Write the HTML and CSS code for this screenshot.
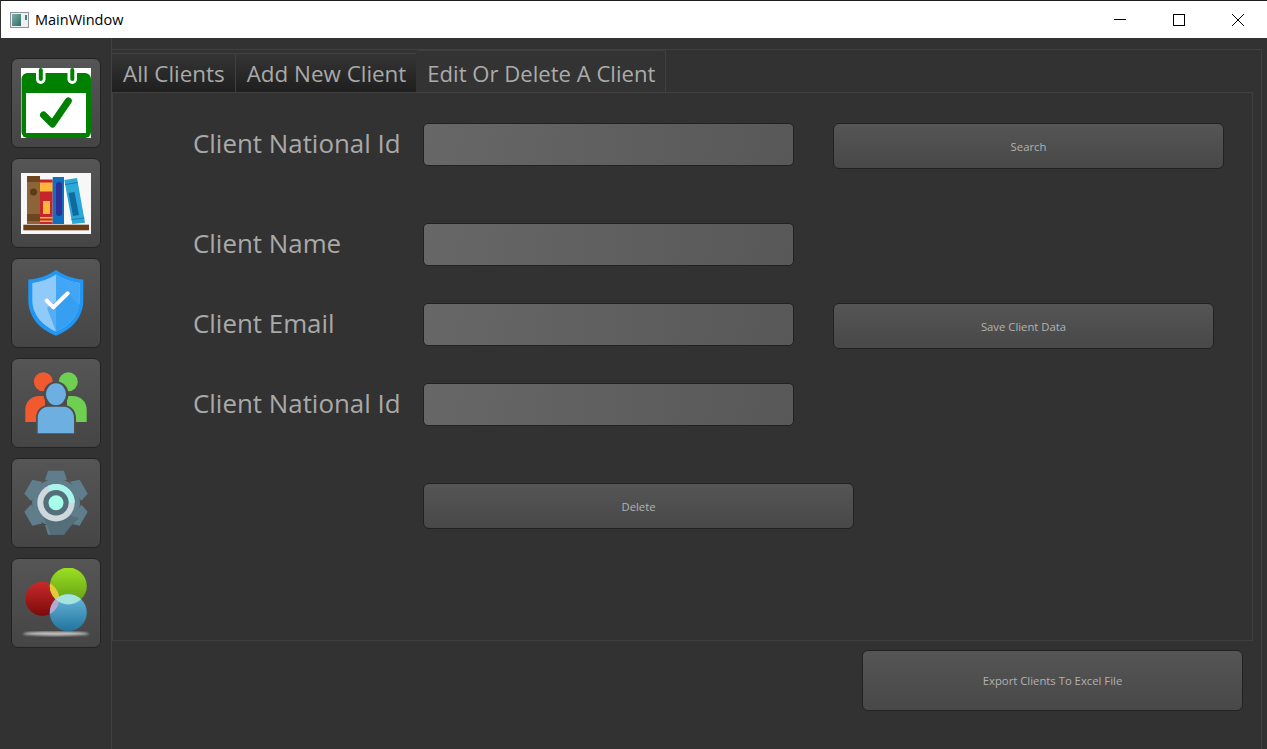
FILE: index.html
```html
<!DOCTYPE html>
<html lang="en">
<head>
<meta charset="utf-8">
<title>MainWindow</title>
<link rel="stylesheet" href="styles.css">
</head>
<body>
<div class="window">
  <header class="titlebar">
    <svg class="app-icon" width="20" height="17" viewBox="0 0 20 17">
      <defs><linearGradient id="appg" x1="0" y1="0" x2="1" y2="1"><stop offset="0" stop-color="#7fb0a8"/><stop offset="1" stop-color="#2f6f66"/></linearGradient></defs>
      <rect x="0.500" y="0.500" width="18" height="15" fill="#eef0f2" stroke="#8f9499"/>
      <rect x="2" y="2" width="9" height="12" fill="url(#appg)"/>
      <rect x="15" y="3" width="2" height="5" fill="#3f7f8f"/>
    </svg>
    <span class="title">MainWindow</span>
    <div class="controls">
      <svg class="ctl" width="14" height="14" viewBox="0 0 14 14"><path d="M1 6.500H13" stroke="#000" fill="none"/></svg>
      <svg class="ctl" width="14" height="14" viewBox="0 0 14 14"><rect x="1.500" y="1.500" width="11" height="11" stroke="#000" fill="none"/></svg>
      <svg class="ctl" width="14" height="14" viewBox="0 0 14 14"><path d="M1 1L13 13M13 1L1 13" stroke="#000" fill="none"/></svg>
    </div>
  </header>
  <div class="body">
    <nav class="sidebar">
      <button class="nav-btn" type="button">
        <svg width="70" height="70" viewBox="0 0 70 70">
          <rect width="70" height="70" fill="#fff"/>
          <rect x="0.500" y="5" width="69.500" height="65" rx="6" fill="#008000"/>
          <rect x="5" y="25" width="60" height="40" fill="#fff"/>
          <rect x="15" y="-6" width="9.500" height="22" rx="4.700" fill="#fff"/>
          <rect x="46.500" y="-6" width="9.500" height="22" rx="4.700" fill="#fff"/>
          <rect x="17.800" y="0" width="4" height="13" rx="2" fill="#008000"/>
          <rect x="49.300" y="0" width="4" height="13" rx="2" fill="#008000"/>
          <path d="M22.500 47L31.500 56L47.300 33" stroke="#008000" stroke-width="7" stroke-linecap="round" stroke-linejoin="round" fill="none"/>
        </svg>
      </button>
      <button class="nav-btn" type="button">
        <svg width="70" height="61" viewBox="0 0 70 61">
          <rect width="70" height="61" fill="#f7f7f7"/>
          <rect x="6" y="3" width="13" height="48" fill="#8d6438"/>
          <rect x="6" y="3" width="13" height="6" fill="#6d4520"/>
          <rect x="6" y="41" width="13" height="7" fill="#6d4520"/>
          <circle cx="12.500" cy="19" r="3.500" fill="#5f3a18"/>
          <rect x="19" y="6.500" width="12.700" height="44.500" fill="#c6252c"/>
          <rect x="19" y="9.500" width="12.700" height="9" fill="#fdb53c"/>
          <rect x="22" y="28" width="7" height="13" fill="#fdb53c"/>
          <rect x="19" y="44" width="12.700" height="1.500" fill="#fdb53c"/>
          <rect x="19" y="47.500" width="12.700" height="1.500" fill="#fdb53c"/>
          <rect x="31.700" y="4" width="11.300" height="47" fill="#0f6fc0"/>
          <rect x="35" y="9" width="6" height="34" rx="3" fill="#2f2f96"/>
          <path d="M43.300 7L56 5L64 49.700L51.300 51Z" fill="#2ba8d8"/>
          <path d="M47.500 20L53.500 19L58 42L52 43Z" fill="#0f6aa0"/>
          <path d="M44.200 11.500L56.800 9.500M50.500 46.500L63.300 45" stroke="#0f7fae" fill="none"/>
          <rect x="2.300" y="51.700" width="65.700" height="5.600" fill="#6a3f17"/>
        </svg>
      </button>
      <button class="nav-btn" type="button">
        <svg width="70" height="70" viewBox="0 0 70 70">
          <path d="M35 2C42 7 52 11 62.300 11.500V32C62.300 50 50 62 35 67.700C20 62 7.300 50 7.300 32V11.500C18 11 28 7 35 2Z" fill="#2196f3"/>
          <path d="M35 6.500C42 10.500 50 14 58.500 15V32C58.500 47 48 58 35 63.500C22 58 11.300 47 11.300 32V15C20 14 28 10.500 35 6.500Z" fill="#90caf9"/>
          <path d="M35 6.500C42 10.500 50 14 58.500 15V32C58.500 47 48 58 35 63.500Z" fill="#42a5f5"/>
          <path d="M46 24L58.500 38C56 48 47 58 35 63.500L26 40Z" fill="#2f9bf0" opacity="0.600"/>
          <path d="M25.700 32.700L32.300 39.300L46.700 25.300" stroke="#fff" stroke-width="4" stroke-linecap="round" stroke-linejoin="round" fill="none"/>
        </svg>
      </button>
      <button class="nav-btn" type="button">
        <svg width="70" height="70" viewBox="0 0 70 70">
          <circle cx="22.300" cy="13.700" r="9.500" fill="#f15a2e"/>
          <circle cx="47.300" cy="13.700" r="9.500" fill="#6fcf52"/>
          <path d="M4.300 54V42C4.300 33 11 28 18 28H24V54Z" fill="#f15a2e"/>
          <path d="M65.700 54V42C65.700 33 59 28 52 28H46V54Z" fill="#6fcf52"/>
          <path d="M15 66V50C15 42 21 37 27 37H43C49 37 55 42 55 50V66Z" fill="#4d4d4d"/>
          <ellipse cx="35" cy="26.300" rx="12.500" ry="13" fill="#4d4d4d"/>
          <ellipse cx="35" cy="26.300" rx="10" ry="11" fill="#6cafe0"/>
          <path d="M16.700 65.300V50C16.700 43 22 38.700 27 38.700H43C48 38.700 53 43 53 50V65.300Z" fill="#6cafe0"/>
        </svg>
      </button>
      <button class="nav-btn" type="button">
        <svg width="70" height="70" viewBox="0 0 70 70">
          <g fill="#607d8b">
            <circle cx="35" cy="34.700" r="24"/>
            <path d="M27 2.700H43L46 12H24ZM24 57H46L43 66.700H27Z"/>
            <path d="M27 2.700H43L46 12H24ZM24 57H46L43 66.700H27Z" transform="rotate(60 35 34.700)"/>
            <path d="M27 2.700H43L46 12H24ZM24 57H46L43 66.700H27Z" transform="rotate(120 35 34.700)"/>
          </g>
          <path d="M47 47L58 50L50 58L43 66.700H30L22 48Z" fill="#546e7a"/>
          <circle cx="35" cy="34.700" r="18.700" fill="#cfd8dc"/>
          <path d="M26.500 18A18.700 18.700 0 0 1 53.700 34.700H35Z" fill="#a7f5ec"/>
          <circle cx="35" cy="34.700" r="12.700" fill="#546e7a"/>
          <circle cx="35" cy="34.700" r="7.500" fill="#a7ffeb"/>
        </svg>
      </button>
      <button class="nav-btn" type="button">
        <svg class="icon-orbs" width="70" height="74" viewBox="0 0 70 74">
          <defs>
            <linearGradient id="gr" x1="0" y1="0" x2="0" y2="1"><stop offset="0" stop-color="#c92a2a"/><stop offset="1" stop-color="#7d0a0a"/></linearGradient>
            <linearGradient id="gg" x1="0" y1="0" x2="0" y2="1"><stop offset="0" stop-color="#9be024"/><stop offset="1" stop-color="#5f9c12"/></linearGradient>
            <linearGradient id="gb" x1="0" y1="0" x2="0" y2="1"><stop offset="0" stop-color="#6ab8dc"/><stop offset="1" stop-color="#22749e"/></linearGradient>
            <clipPath id="cr"><circle cx="21.300" cy="30.700" r="17"/></clipPath>
            <clipPath id="cg"><circle cx="47.300" cy="18" r="18.500"/></clipPath>
            <filter id="bl"><feGaussianBlur stdDeviation="1"/></filter>
          </defs>
          <ellipse cx="35" cy="65.700" rx="33" ry="2" fill="#c4c4c4" filter="url(#bl)"/>
          <circle cx="21.300" cy="30.700" r="17" fill="url(#gr)"/>
          <circle cx="47.300" cy="18" r="18.500" fill="url(#gg)"/>
          <circle cx="47.300" cy="44.700" r="18.500" fill="url(#gb)"/>
          <circle cx="47.300" cy="18" r="18.500" fill="#e3c93c" clip-path="url(#cr)"/>
          <circle cx="47.300" cy="44.700" r="18.500" fill="#b2a8d0" clip-path="url(#cr)"/>
          <circle cx="47.300" cy="44.700" r="18.500" fill="#a5e4dc" clip-path="url(#cg)"/>
        </svg>
      </button>
    </nav>
    <main class="main">
      <div class="frame">
        <div class="tabs">
          <div class="tab">All Clients</div>
          <div class="tab">Add New Client</div>
          <div class="tab active">Edit Or Delete A Client</div>
        </div>
        <section class="pane">
          <div class="row">
            <label class="label">Client National Id</label>
            <div class="input"></div>
            <button class="btn btn-search" type="button">Search</button>
          </div>
          <div class="row spaced">
            <label class="label">Client Name</label>
            <div class="input"></div>
          </div>
          <div class="row">
            <label class="label">Client Email</label>
            <div class="input"></div>
            <button class="btn btn-save" type="button">Save Client Data</button>
          </div>
          <div class="row">
            <label class="label">Client National Id</label>
            <div class="input"></div>
          </div>
          <div class="row spaced">
            <span class="label"></span>
            <button class="btn btn-delete" type="button">Delete</button>
          </div>
        </section>
      </div>
      <div class="footer">
        <button class="btn btn-export" type="button">Export Clients To Excel File</button>
      </div>
    </main>
  </div>
</div>
</body>
</html>
```
FILE: styles.css
```css
* { box-sizing: border-box; }
html, body { margin: 0; height: 100%; overflow: hidden; }
body { font-family: "Open Sans", "Noto Sans", sans-serif; background: #323232; }
.window { width: 1267px; height: 749px; display: flex; flex-direction: column; }

.titlebar { height: 38px; flex: none; display: flex; align-items: center; background: #fff; border-top: 1px solid #1c1c1c; border-left: 1px solid #333; padding-left: 9px; }
.app-icon { display: block; flex: none; margin-top: 1px; }
.title { margin-left: 5px; font-size: 14.5px; color: #000; }
.controls { margin-left: auto; display: flex; align-items: center; gap: 45px; padding-right: 22px; }
.ctl { display: block; }

.body { flex: 1; display: flex; min-height: 0; background: #323232; }
.sidebar { width: 112px; flex: none; border-right: 1px solid #404040; padding: 20px 0 0 11px; display: flex; flex-direction: column; gap: 10px; }
.nav-btn { width: 90px; height: 90px; padding: 0; display: flex; align-items: center; justify-content: center; background: linear-gradient(#555, #454545); border: 1px solid #232323; border-radius: 7px; }
.nav-btn svg { display: block; }
.nav-btn .icon-orbs { margin-top: 4px; }

.main { flex: 1; min-width: 0; display: flex; flex-direction: column; margin: 11px 5px 0 0; border-top: 1px solid #404040; border-right: 1px solid #404040; }
.frame { padding: 0 8px 0 0; }
.tabs { display: flex; align-items: flex-end; height: 42px; }
.tab { height: 39px; padding: 0 10px 0 11px; display: flex; align-items: center; font-size: 22.4px; color: #a9a9a9; background: linear-gradient(#353535, #1e1e1e); border: 1px solid #404040; border-bottom: 0; border-left-width: 0; white-space: nowrap; }
.tab.active { height: 42px; margin-left: -1px; background: #333; color: #ababab; font-size: 22.1px; padding: 2px 10px 0 11px; border-radius: 3px 3px 0 0; }
.pane { height: 549px; border: 1px solid #404040; padding: 30px 0 0 80px; display: flex; flex-direction: column; gap: 34px; background: #323232; }

.row { display: flex; align-items: flex-start; height: 46px; }
.row.spaced { margin-top: 20px; }
.label { width: 230px; flex: none; height: 39px; display: flex; align-items: center; font-size: 25.9px; color: #a9a9a9; white-space: nowrap; }
.input { width: 371px; height: 43px; flex: none; background: linear-gradient(100deg, #676767, #585858); border: 1px solid #222; border-radius: 5px; }
.btn { flex: none; font-family: "Open Sans", "Noto Sans", sans-serif; font-size: 11.3px; color: #b2b2b2; background: linear-gradient(#555, #484848); border: 1px solid #222; border-radius: 6px; padding: 0; height: 46px; }
.btn-search { width: 391px; margin-left: 39px; }
.btn-save { width: 381px; margin-left: 39px; }
.btn-delete { width: 431px; }

.footer { display: flex; justify-content: flex-end; padding: 9px 18px 0 0; }
.btn-export { width: 381px; height: 61px; }
```
